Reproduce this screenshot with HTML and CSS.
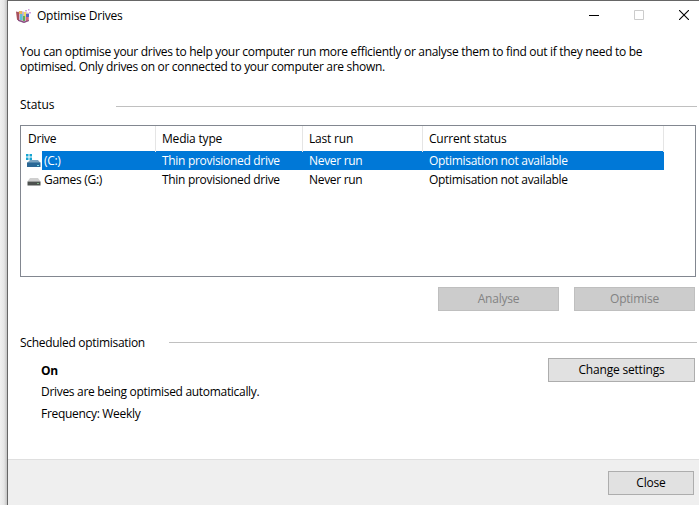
FILE: index.html
```html
<!DOCTYPE html>
<html lang="en-GB">
<head>
  <meta charset="UTF-8">
  <title>Optimise Drives</title>
  <link rel="stylesheet" href="styles.css">
</head>
<body>

  <div class="window">

    <header class="titlebar">
      <svg class="app-icon" width="16" height="16" viewBox="0 0 16 16">
        <path d="M1 4l4-1 8 2v8l-5 2-6-2z" fill="#c9b4cf"/>
        <path d="M0 3.500l3 .7v8.300l-2-.8z" fill="#a8505c"/>
        <path d="M3 3h3v3H3z" fill="#e8b35c"/>
        <path d="M4 6h2.500v6H4z" fill="#5fbdd6"/>
        <path d="M8 4h2v5H8z" fill="#ebdc62"/>
        <path d="M7 8h2v5H7z" fill="#5fae54"/>
        <path d="M10 6h3v3h-3z" fill="#5a60c4"/>
        <path d="M10 9h2.500v4H10z" fill="#d5687a"/>
        <path d="M2 11.500l6 2 5-1.500v1l-5 2-6-2.200z" fill="#8a4f80"/>
        <path d="M9 2h2v1.500H9zM12 1h1.500v1.500H12zM13 4h2v1.500h-2z" fill="#d3a4dd"/>
      </svg>
      <h1>Optimise Drives</h1>
      <div class="controls">
        <svg width="10" height="10" viewBox="0 0 10 10"><path d="M0 5.500h10" stroke="#000"/></svg>
        <svg width="10" height="10" viewBox="0 0 10 10"><path d="M.5.5h9v9h-9z" fill="none" stroke="#ccc"/></svg>
        <svg width="10" height="10" viewBox="0 0 10 10"><path d="M0 0l10 10M10 0L0 10" stroke="#000" stroke-width="1.100"/></svg>
      </div>
    </header>

    <main class="content">
      <p class="intro">You can optimise your drives to help your computer run more efficiently or analyse them to find out if they need to be<br>optimised. Only drives on or connected to your computer are shown.</p>

      <div class="section-title status-title"><h2>Status</h2></div>

      <div class="drives">
        <div class="row head">
          <span>Drive</span><span>Media type</span><span>Last run</span><span>Current status</span>
        </div>
        <div class="row selected">
          <span class="drive">
            <svg width="16" height="14" viewBox="0 0 16 14">
              <path d="M0 0h2.500v2.500H0zM3.500 0H6v2.500H3.500zM0 3.500h2.500V6H0zM3.500 3.500H6V6H3.500z" fill="#16a5d2"/>
              <path d="M4 6h8l2.500 3H1z" fill="#7ba3c0"/>
              <path d="M1 8.500h13.500V13H1z" fill="#2b6896"/>
              <path d="M11 11h2v1h-2z" fill="#7be4ed"/>
            </svg>
            <b>(C:)</b>
          </span>
          <span>Thin provisioned drive</span><span>Never run</span><span>Optimisation not available</span>
        </div>
        <div class="row">
          <span class="drive">
            <svg width="16" height="14" viewBox="0 0 16 14">
              <path d="M4 5h8l2.500 3.500H1.500z" fill="#cfcfcf"/>
              <path d="M1.500 8.500h13v4h-13z" fill="#4d514f"/>
              <path d="M11 10h2v1h-2z" fill="#7fb285"/>
            </svg>
            <b>Games (G:)</b>
          </span>
          <span>Thin provisioned drive</span><span>Never run</span><span>Optimisation not available</span>
        </div>
      </div>

      <div class="actions">
        <button class="btn" disabled>Analyse</button>
        <button class="btn" disabled>Optimise</button>
      </div>

      <div class="section-title schedule-title"><h2>Scheduled optimisation</h2></div>

      <div class="schedule">
        <div class="schedule-info">
          <strong>On</strong>
          <p>Drives are being optimised automatically.</p>
          <p class="frequency">Frequency: Weekly</p>
        </div>
        <button class="btn change">Change settings</button>
      </div>
    </main>

    <footer class="footer">
      <button class="btn close">Close</button>
    </footer>

  </div>

</body>
</html>
```

FILE: styles.css
```css
* { box-sizing: border-box; }
body { margin: 0; height: 505px; padding-left: 7px; overflow: hidden; background: linear-gradient(to right, #f0f0f0, #e6e6e6 4px, #c4c4c4 7px); font-family: "Open Sans", "Noto Sans", sans-serif; font-size: 12px; line-height: 16px; letter-spacing: -0.305px; color: #000; }
h1, h2, p { margin: 0; font-size: 12px; font-weight: normal; white-space: nowrap; }
svg { display: block; flex: none; }

.window { display: flex; flex-direction: column; height: 505px; background: #fff; border-top: 1px solid #666; border-left: 1px solid #666; }

.titlebar { display: flex; align-items: center; height: 30px; padding: 0 9px 0 8px; }
.titlebar h1 { margin-left: 5px; letter-spacing: -0.22px; }
.controls { display: flex; gap: 35px; margin-left: auto; margin-right: 1px; margin-top: -2px; }

.content { flex: none; height: 428px; padding: 13px 3px 0 12px; }
.intro { line-height: 15px; }

.section-title { display: flex; align-items: flex-start; height: 16px; margin-right: -1px; }
.section-title::after { content: ""; flex: 1; height: 1px; background: #c0c0c0; }
.status-title { margin-top: 23px; }
.status-title::after { margin-top: 9px; }
.status-title h2 { width: 96px; letter-spacing: -0.1px; }
.schedule-title { margin-top: 23px; }
.schedule-title::after { margin-top: 8px; }
.schedule-title h2 { width: 149px; padding-top: 1px; }

.drives { width: 676px; height: 152px; margin-top: 12px; border: 1px solid #828790; }
.row { display: grid; grid-template-columns: 135px 147px 120px 241px; width: 643px; height: 19px; line-height: 19px; white-space: nowrap; }
.row > span { padding-left: 6px; }
.head { height: 25px; line-height: 26px; letter-spacing: -0.2px; }
.head > span { border-right: 1px solid #e5e5e5; }
.head > span:first-child { padding-left: 7px; }
.row > .drive { display: flex; align-items: center; padding-left: 5px; }
.drive b { flex: 1; padding-left: 2px; font-weight: normal; }
.selected { color: #fff; background: linear-gradient(to right, #fff 21px, #0078d7 21px); }

.btn { height: 24px; padding: 0; border: 1px solid #adadad; background: #e1e1e1; color: #000; font: inherit; letter-spacing: -0.2px; }
.btn:disabled { width: 121px; border-color: #bfbfbf; background: #ccc; color: #838383; }
.actions { display: flex; justify-content: flex-end; gap: 15px; margin-top: 10px; padding-right: 1px; }

.schedule { display: flex; justify-content: space-between; align-items: flex-start; margin-top: 8px; padding: 0 1px 0 21px; }
.schedule-info { padding-top: 5px; }
.schedule-info p { margin-top: 5px; }
.schedule-info .frequency { margin-top: 6px; }
.change { width: 147px; }

.footer { display: flex; justify-content: flex-end; align-items: flex-start; flex: 1; padding: 11px 5px 0 0; background: #efefef; border-top: 1px solid #dfdfdf; }
.close { width: 86px; }
```
